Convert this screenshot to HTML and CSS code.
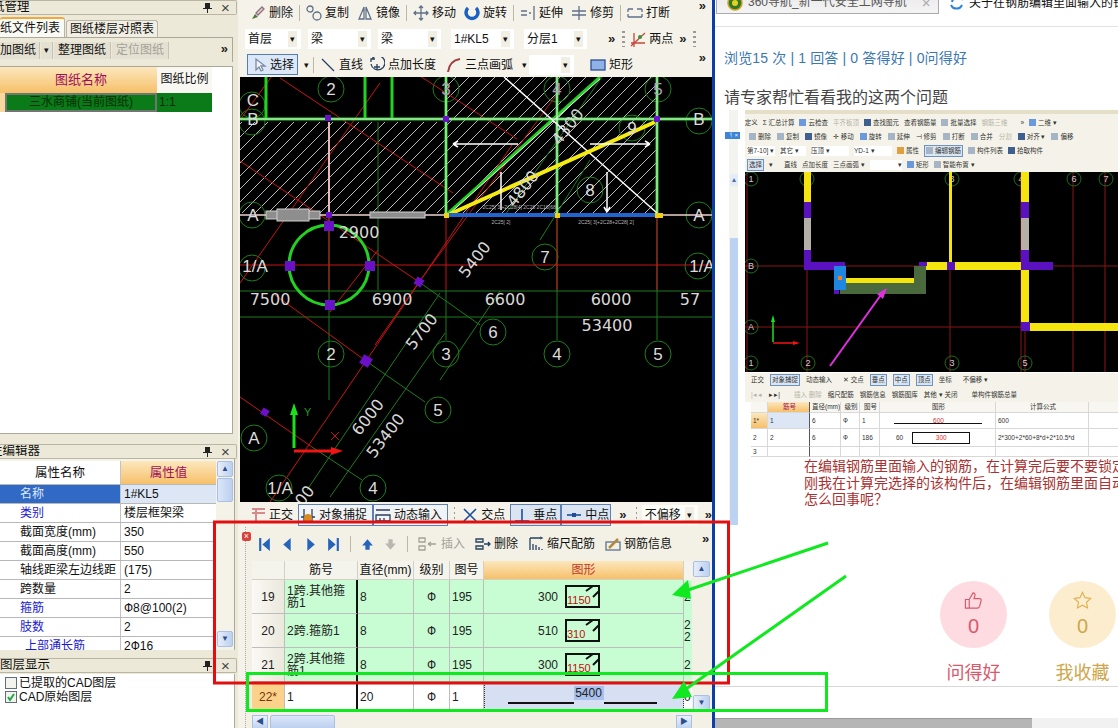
FILE: index.html
```html
<!DOCTYPE html>
<html lang="zh">
<head>
<meta charset="utf-8">
<title>钢筋编辑</title>
<link rel="stylesheet" href="styles.css">
</head>
<body>
<div class="app">

  <aside class="left">
    <div class="ptitle"><span class="ptext clip-a">纸管理</span><svg class="pin" viewBox="0 0 9 11"><path d="M2 1h5v5h2v1H5v4H4V7H0V6h2z"/></svg><span class="close">×</span></div>
    <div class="tabs">
      <span class="tab on">纸文件列表</span>
      <span class="tab">图纸楼层对照表</span>
    </div>
    <div class="lbar">
      <span class="lbtn w-a">加图纸</span><span class="lbtn w-b">▾</span><span class="lbtn">整理图纸</span><span class="lbtn off">定位图纸</span>
      <span class="more lmore">»</span>
    </div>
    <div class="sheet">
      <div class="srow shead"><span class="sc0 org"></span><span class="sc1 org">图纸名称</span><span class="sc2">图纸比例</span></div>
      <div class="srow scur"><span class="sc0 pale"></span><span class="sc1 cur">三水商铺(当前图纸)</span><span class="sc2 cur2">1:1</span></div>
    </div>

    <div class="ptitle t2"><span class="ptext clip-b">性编辑器</span><svg class="pin" viewBox="0 0 9 11"><path d="M2 1h5v5h2v1H5v4H4V7H0V6h2z"/></svg><span class="close">×</span></div>
    <div class="props">
      <div class="ptable">
        <div class="prow phead"><span class="pa mc">属性名称</span><span class="pb mc org mag">属性值</span></div>
        <div class="prow"><span class="pa sel">名称</span><span class="pb selv">1#KL5</span></div>
        <div class="prow"><span class="pa blue">类别</span><span class="pb">楼层框架梁</span></div>
        <div class="prow"><span class="pa">截面宽度(mm)</span><span class="pb">350</span></div>
        <div class="prow"><span class="pa">截面高度(mm)</span><span class="pb">550</span></div>
        <div class="prow"><span class="pa">轴线距梁左边线距</span><span class="pb">(175)</span></div>
        <div class="prow"><span class="pa">跨数量</span><span class="pb">2</span></div>
        <div class="prow"><span class="pa blue">箍筋</span><span class="pb">Ф8@100(2)</span></div>
        <div class="prow"><span class="pa blue">肢数</span><span class="pb">2</span></div>
        <div class="prow"><span class="pa blue ind">上部通长筋</span><span class="pb">2Ф16</span></div>
      </div>
      <div class="vbar pscroll"><span class="vbtn">▲</span><span class="vthumb"></span><span class="vfill"></span><span class="vbtn">▼</span></div>
    </div>

    <div class="ptitle t3"><span class="ptext">图层显示</span><svg class="pin" viewBox="0 0 9 11"><path d="M2 1h5v5h2v1H5v4H4V7H0V6h2z"/></svg><span class="close">×</span></div>
    <div class="layers">
      <label class="lay"><span class="chk"></span>已提取的CAD图层</label>
      <label class="lay"><span class="chk"><svg viewBox="0 0 10 10"><path class="tick" d="M2 5l2 3 4-6"/></svg></span>CAD原始图层</label>
    </div>
  </aside>

  <main class="mid">
    <div class="bar bar1">
      <span class="tool"><svg class="ic" viewBox="0 0 16 16"><path class="i-g" d="M2 14l3-5 3 3z"/><path class="i-p" d="M6 8l6-6 2 2-6 6z"/></svg>删除</span><i class="sep"></i>
      <span class="tool"><svg class="ic" viewBox="0 0 16 16"><circle class="i-l" cx="4" cy="4" r="3"/><circle class="i-l" cx="11" cy="11" r="4"/></svg>复制</span>
      <span class="tool"><svg class="ic" viewBox="0 0 16 16"><path class="i-l" d="M7 2L2 14h5zM9 2l5 12H9z"/></svg>镜像</span><i class="sep"></i>
      <span class="tool"><svg class="ic" viewBox="0 0 16 16"><path class="i-l" d="M8 1v14M1 8h14M6 3l2-2 2 2M6 13l2 2 2-2M3 6L1 8l2 2M13 6l2 2-2 2"/></svg>移动</span>
      <span class="tool"><svg class="ic" viewBox="0 0 16 16"><path class="i-b" d="M4 3a6 6 0 1 0 8 0"/></svg>旋转</span><i class="sep"></i>
      <span class="tool"><svg class="ic" viewBox="0 0 16 16"><path class="i-l" d="M1 6h6M1 10h6M9 8h2M14 1v14"/></svg>延伸</span>
      <span class="tool"><svg class="ic" viewBox="0 0 16 16"><path class="i-l" d="M1 6h14M1 10h14M8 1v14"/></svg>修剪</span><i class="sep"></i>
      <span class="tool"><svg class="ic" viewBox="0 0 16 16"><path class="i-l" d="M1 4h5M10 4h5M1 12h14M1 4v3M15 4v3M1 12V9M15 12V9"/></svg>打断</span>
      <span class="more bar-more">»</span>
    </div>
    <div class="bar bar2">
      <span class="combo c1">首层<b>▾</b></span>
      <span class="combo c2">梁<b>▾</b></span>
      <span class="combo c2">梁<b>▾</b></span>
      <span class="combo c3">1#KL5<b>▾</b></span>
      <span class="combo c3">分层1<b>▾</b></span>
      <span class="more m2">»</span>
      <i class="grip g2"></i>
      <span class="tool"><svg class="ic" viewBox="0 0 16 16"><path class="i-r" d="M1 12h14M4 2v14M1 15L15 2"/><circle class="i-gf" cx="10" cy="6" r="2"/></svg>两点</span>
      <span class="more m3">»</span>
      <i class="grip"></i>
    </div>
    <div class="bar bar3">
      <span class="tool sel-btn"><svg class="ic" viewBox="0 0 16 16"><path class="i-w" d="M5 2v11l3-3 2 4 2-1-2-4h4z"/></svg>选择</span><b class="arr">▾</b><i class="sep"></i>
      <span class="tool"><svg class="ic" viewBox="0 0 16 16"><path class="i-dk" d="M2 2l12 12"/></svg>直线</span>
      <span class="tool"><svg class="ic" viewBox="0 0 16 16"><path class="i-dk" d="M6 2h-4v3M3 2a7 7 0 1 1-1 5"/><path class="i-dk" d="M8 7v6M5 10h6"/></svg>点加长度</span>
      <span class="tool t-arc"><svg class="ic" viewBox="0 0 16 16"><path class="i-red" d="M2 15C3 7 7 3 14 2"/></svg>三点画弧</span><b class="arr a2">▾</b>
      <span class="combo c4"><b>▾</b></span>
      <span class="tool t-rect"><svg class="ic" viewBox="0 0 16 16"><rect class="i-rc" x="1" y="3" width="14" height="10"/></svg>矩形</span>
      <span class="more bar-more">»</span>
    </div>

    <svg class="cad" viewBox="240 77 472 425" preserveAspectRatio="none">
      <defs>
        <pattern id="hatch" width="13" height="13" patternUnits="userSpaceOnUse">
          <path class="hl" d="M-1 14L14 -1"/>
        </pattern>
      </defs>
      <rect class="bg" x="240" y="77" width="472" height="425"/>
      <rect fill="url(#hatch)" x="240" y="122" width="206" height="91"/>
      <rect fill="url(#hatch)" x="446" y="77" width="211" height="136"/>
      <g class="gthin">
        <path d="M240 291H712M240 317H712M329 215V400M378 122V290M446 290V340M557 215V340M657 215V340"/>
        <path d="M440 293L307 490M445 333L330 497M500 291L440 380"/>
        <path d="M419 282L480 325M366 361L425 402M312 447L362 480"/>
        <path d="M505 215L602 77M590 160L540 240"/>
        <circle cx="331" cy="89" r="13"/><circle cx="446" cy="89" r="13"/><circle cx="557" cy="89" r="13"/><circle cx="658" cy="89" r="13"/>
        <circle cx="252" cy="105" r="13"/><circle cx="252" cy="122" r="13"/><circle cx="699" cy="121" r="13"/>
        <circle cx="252" cy="215" r="13"/><circle cx="699" cy="215" r="13"/><circle cx="252" cy="268" r="13"/><circle cx="698" cy="266" r="13"/>
        <circle cx="545" cy="257" r="13"/><circle cx="590" cy="190" r="13"/><circle cx="632" cy="128" r="13"/>
        <circle cx="493" cy="332" r="13"/><circle cx="331" cy="354" r="13"/><circle cx="446" cy="354" r="13"/><circle cx="557" cy="354" r="13"/><circle cx="658" cy="354" r="13"/>
        <circle cx="438" cy="410" r="13"/><circle cx="254" cy="438" r="13"/><circle cx="279" cy="488" r="13"/><circle cx="373" cy="488" r="13"/>
      </g>
      <g class="rthin">
        <path d="M240 265H712M446 215V290M557 215V290M657 215V290M329 215V290"/>
        <path d="M280 78L453 193M420 76L517 139M240 161L419 282M275 295L366 361M240 397L312 447"/>
        <path d="M272 76L240 120M380 83L240 283M560 90L419 282L375 345M512 145L366 361L270 502M378 250L330 312"/>
        <path d="M331 432l8 8m0-8l-8 8"/>
      </g>
      <g class="wall">
        <path d="M266 77V119M365 77V119M392 77V119"/>
        <path d="M240 119H712"/>
        <path d="M446 77V215M557 77V215M657 77V215"/>
        <path d="M446 215L600 77"/>
        <circle class="ring" cx="329" cy="265" r="40"/>
      </g>
      <g class="wcore">
        <path d="M446 77V215M557 77V215M657 77V215M240 119H712"/>
        <path d="M448 215L600 79"/>
      </g>
      <path class="wline" d="M329 122V215"/>
      <path class="wwhite" d="M504 77L657 213"/>
      <path class="yel" d="M450 214L655 122"/>
      <path class="pink" d="M240 215H712"/>
      <path class="blueb" d="M447 215H657"/>
      <g class="barg">
        <rect x="266" y="211" width="54" height="8"/><rect x="277" y="209" width="32" height="12"/><rect x="370" y="212" width="55" height="6"/>
      </g>
      <g class="arrowline">
        <path d="M454 144H518M453 144l5-3M453 144l5 3M590 144H650M650 144l-5-3M650 144l-5 3M501 172V210M607 172V212M607 212l-3-5M607 212l3-5"/>
      </g>
      <g class="purple">
        <rect x="324" y="221" width="10" height="10"/><rect x="285" y="261" width="10" height="10"/><rect x="365" y="261" width="10" height="10"/><rect x="325" y="300" width="10" height="10"/>
        <rect x="325" y="115" width="6" height="6"/><rect x="443" y="116" width="6" height="6"/><rect x="654" y="116" width="6" height="6"/><rect x="326" y="212" width="6" height="6"/>
        <rect x="415" y="278" width="8" height="8" transform="rotate(30 419 282)"/><rect x="361" y="356" width="10" height="10" transform="rotate(30 366 361)"/><rect x="261" y="409" width="7" height="7" transform="rotate(30 265 413)"/>
      </g>
      <g class="corner">
        <rect x="444" y="213" width="5" height="5"/><rect x="555" y="213" width="5" height="5"/><rect x="655" y="213" width="8" height="5"/>
      </g>
      <g class="dim">
        <text x="270" y="305" text-anchor="middle">7500</text><text x="392" y="305" text-anchor="middle">6900</text><text x="505" y="305" text-anchor="middle">6600</text><text x="611" y="305" text-anchor="middle">6000</text><text x="690" y="305" text-anchor="middle">57</text>
        <text x="607" y="331" text-anchor="middle">53400</text><text x="359" y="238" text-anchor="middle">2900</text>
        <text x="422" y="337" text-anchor="middle" transform="rotate(-52 422 332)">5700</text>
        <text x="369" y="422" text-anchor="middle" transform="rotate(-52 369 418)">6000</text>
        <text x="386" y="441" text-anchor="middle" transform="rotate(-52 386 436)">53400</text>
        <text x="475" y="265" text-anchor="middle" transform="rotate(-52 475 260)">5400</text>
        <text x="523" y="194" text-anchor="middle" transform="rotate(-52 523 189)">4800</text>
        <text x="568" y="132" text-anchor="middle" transform="rotate(-52 568 127)">4300</text>
        <text x="305" y="501" text-anchor="middle" transform="rotate(-52 305 496)">00</text>
      </g>
      <g class="axtx">
        <text x="331" y="95">2</text><text x="446" y="95" class="fa">3</text><text x="557" y="95" class="fa">4</text><text x="658" y="95" class="fa">5</text>
        <text x="253" y="106">C</text><text x="253" y="125">B</text><text x="699" y="125">B</text><text x="253" y="221">A</text><text x="699" y="221">A</text>
        <text x="255" y="272">1/A</text><text x="702" y="272">1/A</text><text x="545" y="263">7</text><text x="590" y="196">8</text><text x="632" y="134">9</text>
        <text x="493" y="338">6</text><text x="331" y="360">2</text><text x="446" y="360">3</text><text x="557" y="360">4</text><text x="658" y="360">5</text><text x="438" y="416">5</text><text x="254" y="444">A</text><text x="280" y="494">1/A</text><text x="373" y="494">4</text>
      </g>
      <text class="tiny" x="606" y="224" text-anchor="middle">2C25[ 3]+2C28+2C28[ 2]</text>
      <text class="tiny" x="501" y="224" text-anchor="middle">2C25[ 2]</text>
      <text class="tiny" x="520" y="209" text-anchor="middle">2C25[ 3]+2C28[4] 2C28 2C16(68)</text>
      <path class="axg" d="M294 448V410"/><path class="axgh" d="M294 403l-4 12h8z"/>
      <path class="axr" d="M294 451H336"/><path class="axrh" d="M343 451l-12-4v8z"/>
      <text class="yl" x="304" y="416">Y</text>
    </svg>

    <div class="bar bar4">
      <span class="tool"><svg class="ic" viewBox="0 0 16 16"><path class="i-pk" d="M2 2h13M2 6h13M6 2v13"/></svg>正交</span>
      <span class="tool btn w74"><svg class="ic" viewBox="0 0 16 16"><path class="i-dk" d="M1 10h14M4 2v14M12 2v14"/><circle class="i-o" cx="8" cy="11" r="4"/></svg>对象捕捉</span><span class="tool btn w74"><svg class="ic" viewBox="0 0 16 16"><path class="i-dk" d="M1 3h14M1 8h14v6H1zM5 11v3M9 11v3"/></svg>动态输入</span>
      <i class="grip g4"></i>
      <span class="tool"><svg class="ic" viewBox="0 0 16 16"><path class="i-nav" d="M2 2l12 12M14 2L2 14"/></svg>交点</span>
      <span class="tool btn w51"><svg class="ic" viewBox="0 0 16 16"><path class="i-nav" d="M1 14h14M8 2v12"/></svg>垂点</span><span class="tool btn w50"><svg class="ic" viewBox="0 0 16 16"><path class="i-nav" d="M1 8h14"/><rect class="i-navf" x="6" y="6" width="4" height="4"/></svg>中点</span>
      <span class="more m4">»</span>
      <i class="grip g5"></i>
      <span class="combo c5">不偏移<b>▾</b></span>
      <span class="more m5">»</span>
    </div>

    <section class="rebar">
      <span class="rx">×</span>
      <div class="navbar">
        <svg class="nv" viewBox="0 0 12 14"><path class="nf" d="M1 1h2v12H1zM11 1v12L4 7z"/></svg>
        <svg class="nv" viewBox="0 0 12 14"><path class="nf" d="M9 1v12L2 7z"/></svg>
        <svg class="nv" viewBox="0 0 12 14"><path class="nf" d="M3 1v12l7-6z"/></svg>
        <svg class="nv" viewBox="0 0 12 14"><path class="nf" d="M1 1v12l7-6zM9 1h2v12H9z"/></svg>
        <i class="sep nsep"></i>
        <svg class="nv" viewBox="0 0 12 14"><path class="nf" d="M6 2l5 6H8v4H4V8H1z"/></svg>
        <svg class="nv" viewBox="0 0 12 14"><path class="nd" d="M6 12L1 6h3V2h4v4h3z"/></svg>
        <i class="sep nsep"></i>
        <span class="tool off"><svg class="ic wide" viewBox="0 0 20 16"><path class="i-gr" d="M1 2h6v4H1zM1 10h6v4H1zM10 8h8M10 8l3-2M10 8l3 2"/></svg>插入</span>
        <span class="tool"><svg class="ic" viewBox="0 0 16 16"><path class="i-dk" d="M1 3h7v3H1zM1 10h7v3H1zM9 8h6M13 6l2 2-2 2"/></svg>删除</span>
        <span class="tool"><svg class="ic" viewBox="0 0 16 16"><path class="i-dk" d="M2 2h10M2 2v12M5 14V8M8 14V9M11 14v-3M14 14v-1M12 1l2 1-2 1"/></svg>缩尺配筋</span>
        <span class="tool"><svg class="ic" viewBox="0 0 16 16"><rect class="i-l" x="1" y="6" width="14" height="8"/><path class="i-o2" d="M4 12L13 3"/></svg>钢筋信息</span>
        <span class="more nmore">»</span>
      </div>
      <div class="gridwrap">
        <div class="gridbody">
          <div class="gr ghead"><span></span><span>筋号</span><span>直径(mm)</span><span>级别</span><span>图号</span><span class="org mag-d">图形</span><span class="last"></span></div>
          <div class="gr grn"><span class="rh">19</span><span class="jn">1跨.其他箍筋1</span><span class="l">8</span><span>Ф</span><span class="l">195</span>
            <span class="fig"><em>300</em><svg class="shape" viewBox="0 0 36 24"><rect x="1" y="1" width="33" height="21"/><path d="M34 6L28 12M28 1l-7 5"/><text x="2" y="19">1150</text></svg></span><span class="last">2</span></div>
          <div class="gr grn"><span class="rh">20</span><span class="jn">2跨.箍筋1</span><span class="l">8</span><span>Ф</span><span class="l">195</span>
            <span class="fig"><em>510</em><svg class="shape" viewBox="0 0 36 24"><rect x="1" y="1" width="33" height="21"/><path d="M34 6L28 12M28 1l-7 5"/><text x="2" y="19">310</text></svg></span><span class="last">2<br>2</span></div>
          <div class="gr grn"><span class="rh">21</span><span class="jn">2跨.其他箍筋1</span><span class="l">8</span><span>Ф</span><span class="l">195</span>
            <span class="fig"><em>300</em><svg class="shape" viewBox="0 0 36 24"><rect x="1" y="1" width="33" height="21"/><path d="M34 6L28 12M28 1l-7 5"/><text x="2" y="19">1150</text></svg></span><span class="last">2</span></div>
          <div class="gr gcur"><span class="rh rhc">22*</span><span class="l">1</span><span class="l">20</span><span>Ф</span><span class="l">1</span>
            <span class="figc"><i class="ln"></i><u>5400</u><i class="ln l2"></i></span><span class="last">0</span></div>
        </div>
        <div class="vbar gscroll"><span class="vbtn">▲</span><span class="vfill"></span><span class="vbtn">▼</span></div>
      </div>
      <div class="hbar"><span class="hbtn">◀</span><span class="hthumb"></span><span class="hfill"></span><span class="hbtn">▶</span></div>
    </section>
  </main>

  <div class="divider"></div>

  <section class="web">
    <div class="wtabs">
      <span class="wtab w1"><svg class="fav" viewBox="0 0 16 16"><circle cx="8" cy="8" r="7" class="fv1"/><circle cx="8" cy="8" r="3" class="fv2"/></svg>360导航_新一代安全上网导航<span class="wx">×</span></span>
      <span class="wtab w2"><svg class="fav" viewBox="0 0 16 16"><path class="fv3" d="M3 7a6 6 0 0 1 11-2M2 10a6 6 0 0 0 11 0"/></svg>关于在钢筋编辑里面输入的钢筋</span>
    </div>
    <p class="stat">浏览15 次 | 1 回答 | 0 答得好 | 0问得好</p>
    <h1 class="ask">请专家帮忙看看我的这两个问题</h1>

    <div class="shot">
      <div class="e-side">
        <span class="e-pin">ᛩ ×</span>
        <div class="e-scroll"><span class="e-arr">▴</span><span class="e-track"></span><span class="e-thumb"></span><span class="e-arr">▾</span></div>
      </div>
      <div class="e-main">
        <div class="e-bar e-r1"><span>»</span><span><i class="di bl"></i>定义</span><span>Σ 汇总计算</span><span><i class="di bl"></i>云检查</span><span class="gy">平齐板顶</span><span><i class="di nv2"></i>查找图元</span><span>查看钢筋量</span><span><i class="di gr2"></i>批量选择</span><span class="gy">钢筋三维</span><span class="e-more">»</span><span><i class="di bl"></i>二维 ▾</span></div>
        <div class="e-bar e-r2"><span><i class="di gr2"></i>删除</span><span><i class="di gr2"></i>复制</span><span><i class="di nv2"></i>镜像</span><span>✛ 移动</span><span><i class="di bl"></i>旋转</span><span><i class="di gr2"></i>延伸</span><span>⊣ 修剪</span><span><i class="di gr2"></i>打断</span><span><i class="di gr2"></i>合并</span><span class="gy">分割</span><span><i class="di nv2"></i>对齐 ▾</span><span><i class="di gr2"></i>偏移</span></div>
        <div class="e-bar e-r3"><span class="e-w1">第7-10] ▾</span><span class="e-w2">其它 ▾</span><span class="e-w3">压顶 ▾</span><span class="e-w3">YD-1 ▾</span><span><i class="di og"></i>属性</span><span class="e-on"><i class="di gr2"></i>编辑钢筋</span><span><i class="di gr2"></i>构件列表</span><span><i class="di nv2"></i>拾取构件</span></div>
        <div class="e-bar e-r4"><span class="e-on">选择</span><span>▾</span><span class="e-l">直线</span><span>点加长度</span><span>三点画弧 ▾</span><span class="e-w2 e-wh">▾</span><span><i class="di bl"></i>矩形</span><span><i class="di gr2"></i>智能布置 ▾</span></div>
        <svg class="e-cad" viewBox="745 172 373 200" preserveAspectRatio="none">
          <rect class="bg" x="745" y="172" width="373" height="200"/>
          <path class="e-red" d="M747 172V372M807 172V372M950 172V372M1021 172V372M1025 172V372M1073 172V372M1105 172V372M745 266H1118M745 327H1118"/>
          <g class="e-c">
            <circle cx="751" cy="179" r="7"/><circle cx="807" cy="179" r="7"/><circle cx="952" cy="179" r="7"/><circle cx="1021" cy="179" r="7"/><circle cx="1074" cy="179" r="7"/><circle cx="1106" cy="179" r="7"/>
            <circle cx="751" cy="266" r="7"/><circle cx="751" cy="327" r="7"/><circle cx="751" cy="363" r="7"/><circle cx="808" cy="363" r="7"/><circle cx="952" cy="363" r="7"/><circle cx="1025" cy="363" r="7"/>
          </g>
          <g class="e-t">
            <text x="751" y="182">1</text><text x="807" y="182">2</text><text x="952" y="182">3</text><text x="1021" y="182">4</text><text x="1074" y="182">6</text><text x="1106" y="182">7</text>
            <text x="751" y="269">B</text><text x="751" y="330">A</text><text x="751" y="366">1</text><text x="808" y="366">2</text><text x="952" y="366">3</text><text x="1025" y="366">5</text>
          </g>
          <path class="e-y" d="M804 172h7v30h-7zM949 172h3v90h-3zM926 262h96v8h-96zM1021 172h8v30h-8zM1021 270h8v52h-8zM1029 323h89v8h-89zM846 278h68v5h-68z"/>
          <path class="e-p" d="M804 202h7v16h-7zM804 250h7v12h34v8h-41zM1021 202h8v16h-8zM1021 250h8v12h24v8h-32zM1021 322h9v9h-9zM947 262h8v8h-8zM919 262h8v4h-8zM834 290h5v4h-5zM922 290h4v4h-4z"/>
          <path class="e-gy" d="M804 218h7v32h-7zM1021 218h8v32h-8z"/>
          <path class="e-dg" d="M914 266h12v28H840v-11h74z"/>
          <rect class="e-bb" x="834" y="266" width="12" height="24"/>
          <rect class="e-ob" x="838" y="276" width="4" height="4"/>
          <path class="e-ax1" d="M773 342V318"/><path class="e-axg" d="M773 315l-2 7h4z"/>
          <path class="e-ax2" d="M773 343H796"/><path class="e-axr" d="M800 343l-7-2v4z"/>
          <path class="e-pk" d="M830 366L883 292"/><path class="e-pkh" d="M887 288l-10 6 6 5z"/>
        </svg>
        <div class="e-bar e-r5"><span>正交</span><span class="e-on">对象捕捉</span><span>动态输入</span><span class="e-g">✕ 交点</span><span class="e-on">垂点</span><span class="e-on">中点</span><span class="e-on">顶点</span><span>坐标</span><span class="e-g">不偏移 ▾</span></div>
        <div class="e-bar e-r6"><span class="gy">|◂ ◂</span><span>▸ ▸|</span><span class="gy e-g2">插入 删除</span><span>缩尺配筋</span><span>钢筋信息</span><span>钢筋图库</span><span>其他 ▾ 关闭</span><span class="e-g2">单构件钢筋总量</span></div>
        <div class="e-grid">
          <div class="eg eg-h"><span></span><span class="org mag">筋号</span><span>直径(mm)</span><span>级别</span><span>图号</span><span>图形</span><span>计算公式</span><span></span></div>
          <div class="eg eg-a"><span class="org">1*</span><span class="egsel">1</span><span>6</span><span>Ф</span><span>1</span><span class="egf"><b class="red600">600</b><i class="ehl"></i></span><span>600</span><span></span></div>
          <div class="eg eg-b"><span>2</span><span>2</span><span>6</span><span>Ф</span><span>186</span><span class="egf2">60<b class="box300">300</b></span><span>2*300+2*60+8*d+2*10.5*d</span><span></span></div>
          <div class="eg eg-c"><span>3</span><span></span><span></span><span></span><span></span><span></span><span></span><span></span></div>
        </div>
        <p class="e-note">在编辑钢筋里面输入的钢筋，在计算完后要不要锁定构件<br>刚我在计算完选择的该构件后，在编辑钢筋里面自动多出<br>怎么回事呢？</p>
      </div>
    </div>

    <div class="votes">
      <div class="vote good">
        <span class="disc"><svg viewBox="0 0 20 20"><path d="M1.5 9h4v9h-4zM5.5 9l4-7c1.5 0 2.5 1 2 3l-1 3h6c1 0 2 1 1.500 2l-1.500 6c-.3 1-1 2-2 2h-9"/></svg><b>0</b></span>
        <span class="vl">问得好</span>
      </div>
      <div class="vote fav2">
        <span class="disc"><svg viewBox="0 0 20 20"><path d="M10 1.500l2.600 5.500 6 .8-4.400 4.100 1.100 6L10 15l-5.300 2.900 1.100-6L1.400 7.800l6-.8z"/></svg><b>0</b></span>
        <span class="vl">我收藏</span>
      </div>
    </div>
    <div class="wline-h"></div>
    <div class="wscroll"><span></span></div>
  </section>
</div>

<svg class="marks" viewBox="0 0 1118 728">
  <rect class="m-red" x="214.500" y="522" width="514" height="161"/>
  <rect class="m-green" x="247.500" y="673.500" width="579" height="37"/>
  <path class="m-arrow" d="M828 543L685 591"/>
  <path class="m-head" d="M672 595l16-15 3 19z"/>
  <path class="m-arrow" d="M846 576L686 689"/>
  <path class="m-head" d="M672 699l12-18 8 16z"/>
</svg>
</body>
</html>
```

FILE: styles.css
```css
* { box-sizing: border-box; }
html, body { margin: 0; padding: 0; height: 728px; overflow: hidden; background: #fff; }
body { font: 12px/16px "Liberation Sans", "Noto Sans CJK SC", sans-serif; color: #111; position: relative; }
p, h1 { margin: 0; }
.app { display: grid; grid-template-columns: 238px 474px 3px 403px; height: 728px; overflow: hidden; }

/* shared */
.org { background: linear-gradient(#fce7bd, #f6c069); }
.more { font-weight: 700; font-size: 13px; color: #222; }
.sep { display: block; width: 1px; height: 16px; background: #bbb8a6; margin: 0 -2px; }
.grip { display: block; width: 3px; height: 16px; background: repeating-linear-gradient(#999 0 2px, transparent 2px 5px); }
.tool { display: flex; align-items: center; gap: 3px; white-space: nowrap; flex: none; }
.ic { width: 16px; height: 16px; flex: none; fill: none; stroke-width: 1.300; }
.ic.wide { width: 20px; }
.off { color: #a5a298; }

.i-g { fill: #4d7a3a; }
.i-p { fill: #e8d8b8; stroke: #8c6d8c; }
.i-l { stroke: #60708a; fill: none; }
.i-b { stroke: #1b5fc0; stroke-width: 3.500; fill: none; }
.i-r { stroke: #c9463a; fill: none; }
.i-gf { fill: #3e8c3e; }
.i-w { fill: #eef2fb; stroke: #7a8aa0; }
.i-dk { stroke: #27405f; fill: none; }
.i-red { stroke: #a04040; stroke-width: 2; fill: none; }
.i-rc { fill: #8fb2e6; stroke: #2c4f8f; }
.i-pk { stroke: #d88a8a; stroke-width: 2; fill: none; }
.i-o { fill: #d98a20; }
.i-o2 { stroke: #b08a40; stroke-width: 2.500; }
.i-nav { stroke: #1c4e9c; fill: none; stroke-width: 1.600; }
.i-navf { fill: #1c4e9c; }
.i-gr { stroke: #a5a298; fill: none; }

/* left column */
.left { background: #ece9d8; display: flex; flex-direction: column; height: 728px; overflow: hidden; }
.ptitle { height: 15px; display: flex; align-items: center; background: #ece9d8; border: 1px solid #b9b6a5; border-left: 0; border-radius: 0 2px 2px 0; flex: none; margin-right: 1px; font-size: 12.500px; }
.ptext { flex: 1; white-space: nowrap; overflow: hidden; line-height: 13px; }
.clip-a { text-indent: -8px; }
.clip-b { text-indent: -10px; }
.pin { width: 9px; height: 11px; fill: #222; margin-right: 9px; }
.close { width: 12px; color: #444; font-size: 15px; line-height: 13px; margin-right: 3px; }
.tabs { height: 21px; margin-top: 1px; display: flex; align-items: flex-end; flex: none; }
.tab { height: 17px; padding: 0 3px; background: #f1efe4; border: 1px solid #b9b6a5; border-bottom: 0; border-radius: 3px 3px 0 0; line-height: 16px; white-space: nowrap; }
.tab.on { height: 20px; width: 65px; padding: 1px 0 0; background: #fafaf5; border-top: 2px solid #f2a93b; border-left: 0; margin-right: 1px; }
.lbar { height: 25px; margin-right: 5px; padding-top: 4px; display: flex; gap: 1px; align-items: flex-start; flex: none; position: relative; border-right: 1px solid #aca899; border-top: 1px solid #aca899; }
.lbtn { height: 17px; padding: 0 4px; background: #e4e1d2; line-height: 16px; white-space: nowrap; border-right: 1px solid #c6c3b3; }
.w-a { padding: 0 3px 0 0; }
.w-b { padding: 0 3px; font-size: 9px; }
.lmore { margin-left: auto; padding: 0 4px; height: 17px; line-height: 14px; }
.sheet { height: 368px; background: #fff; margin: 4px 5px 0 0; border-top: 1px solid #aca899; border-bottom: 1px solid #aca899; border-right: 1px solid #aca899; flex: none; }
.srow { display: grid; grid-template-columns: 5px 152px 55px; }
.shead { height: 26px; line-height: 25px; text-align: center; }
.shead .sc1 { color: #a0105a; font-size: 13px; }
.shead .sc2 { font-size: 12px; background: #f8f7f1; }
.scur { height: 19px; line-height: 18px; }
.pale { background: #f8d89d; }
.cur { background: #0b7a18; border: 2px solid #6f7770; text-align: center; color: #06300a; font-size: 12px; line-height: 15px; }
.cur2 { background: #0b7a18; color: #06300a; padding-left: 2px; }
.t2 { margin-top: 10px; }
.props { height: 191px; display: flex; margin-right: 3px; padding-top: 2px; overflow: hidden; flex: none; border-right: 1px solid #aca899; background: #f5f3e8; }
.ptable { width: 216px; height: 189px; overflow: hidden; background: #fff; flex: none; }
.prow { display: grid; grid-template-columns: 121px 95px; height: 19px; line-height: 18px; border-bottom: 1px solid #b8b8b8; white-space: nowrap; }
.phead { height: 24px; line-height: 24px; }
.pa { padding-left: 20px; border-right: 1px solid #c3c3c3; overflow: hidden; }
.pb { padding-left: 3px; overflow: hidden; }
.mc { text-align: center; padding: 0; font-size: 12.500px; }
.mag { color: #a0105a; }
.sel { background: #316ac5; color: #dfe8f8; }
.selv { background: #dce6f5; }
.blue { color: #1a1ad0; }
.ind { padding-left: 25px; }
.pscroll { width: 16px; margin-left: 1px; height: 186px; }
.vbar { display: flex; flex-direction: column; flex: none; }
.vbtn { height: 16px; flex: none; background: linear-gradient(90deg, #e6eefb, #bcd0ef); border: 1px solid #a9bfe3; border-radius: 2px; color: #2c4e8c; font-size: 8px; line-height: 14px; text-align: center; }
.vthumb { height: 24px; margin-top: 1px; flex: none; background: linear-gradient(90deg, #dbe6f9, #bcd0ef); border: 1px solid #a9bfe3; border-radius: 2px; }
.vfill { flex: 1; }
.t3 { margin-top: 8px; }
.layers { flex: 1; background: #fff; margin-right: 3px; border-right: 1px solid #aca899; padding: 2px 0 0 5px; margin-top: 1px; }
.lay { display: flex; align-items: center; gap: 2px; height: 14px; white-space: nowrap; }
.chk { width: 12px; height: 12px; border: 1px solid #5f6f80; background: #f4f4ee; display: block; flex: none; }
.chk svg { display: block; }
.tick { fill: none; stroke: #21a84a; stroke-width: 2; }

/* middle column */
.mid { background: #f5f3e9; display: flex; flex-direction: column; height: 728px; width: 474px; overflow: hidden; padding: 0 0 0 2px; }
.bar { display: flex; align-items: center; position: relative; flex: none; white-space: nowrap; }
.bar1 { height: 26px; padding-left: 10px; gap: 8px; }
.bar-more { position: absolute; right: 6px; top: -2px; }
.bar2 { height: 26px; padding-left: 5px; gap: 7px; }
.bar2 .c3 { margin-left: 3px; }
.bar2 .g2 { margin-right: -2px; }
.combo { display: flex; align-items: center; justify-content: space-between; height: 20px; background: #fff; padding: 0 4px 0 3px; flex: none; }
.combo b { font-size: 9px; font-weight: 400; background: #f1efe4; padding: 0 2px; }
.c1 { width: 56px; }
.c2 { width: 63px; }
.c3 { width: 63px; }
.c4 { width: 45px; margin-left: -4px; justify-content: flex-end; }
.c5 { width: 56px; background: #fdfdf8; margin-left: 5px; }
.m2 { margin-left: 14px; }
.m3 { margin-left: -1px; }
.bar3 { height: 25px; padding-left: 7px; gap: 6px; }
.sel-btn { width: 51px; height: 21px; padding-left: 3px; background: #dce8f8; border: 1px solid #517fb5; }
.arr { font-size: 9px; font-weight: 400; }
.bar3 .sep { margin: 0 0 0 -2px; }
.bar3 .t-arc { margin-left: 4px; }
.a2 { margin-left: 3px; }
.t-rect { margin-left: 10px; }
.cad { display: block; width: 472px; height: 425px; flex: none; }
.bg { fill: #000; }
.hl { stroke: #b8b8b8; stroke-width: 1; fill: none; }
.gthin path, .gthin circle { stroke: #1d7d1d; fill: none; stroke-width: 1; }
.rthin path { stroke: #c91414; fill: none; stroke-width: 1; }
.wall path, .wall circle { stroke: #23d123; stroke-width: 3; fill: none; }
.wcore path { stroke: #eef7ee; stroke-width: 1; fill: none; }
.ring { stroke-width: 3; }
.wline { stroke: #e9b7b7; stroke-width: 2; fill: none; }
.wwhite { stroke: #fff; stroke-width: 1.500; fill: none; }
.yel { stroke: #f5ea12; stroke-width: 4; fill: none; }
.pink { stroke: #f0d2d2; stroke-width: 1.500; fill: none; }
.blueb { stroke: #2265d0; stroke-width: 4; fill: none; }
.barg rect { fill: #8e8e8e; stroke: #cfcfcf; stroke-width: 1; }
.arrowline path { stroke: #fff; stroke-width: 1.500; fill: none; }
.purple rect { fill: #6a10c8; }
.corner rect { fill: #f0d010; }
.dim text { font: 16px "DejaVu Sans", sans-serif; fill: #d8d8d8; }
.axtx text { font: 17px "Liberation Sans", sans-serif; fill: #dcdcdc; text-anchor: middle; }
.axtx text.fa { fill: #b49ac0; }
.tiny { font: 5px "Liberation Sans", sans-serif; fill: #b6b6b6; }
.axg { stroke: #1de01d; stroke-width: 3; }
.axgh { fill: #1de01d; }
.axr { stroke: #f01414; stroke-width: 3; }
.axrh { fill: #f01414; }
.yl { font: 11px "Liberation Sans", sans-serif; fill: #1d9a1d; }

.bar4 { height: 25px; padding-left: 10px; gap: 0; }
.bar4 .tool { margin-right: 5px; }
.btn { height: 22px; border: 1px solid #5c80b2; background: #f1f3f4; padding-left: 1px; margin-right: 0 !important; }
.w74 { width: 75px; }
.bar4 .w51 { width: 51px; background: #dbe5f1; padding-left: 3px; }
.bar4 .w50 { width: 50px; background: #dbe5f1; padding-left: 4px; }
.g4 { margin: 0 7px 0 6px; }
.m4 { margin: 0 9px 0 8px; }
.g5 { margin: 0; }
.m5 { margin-left: 7px; }

.rebar { flex: 1; background: #f3f1e6; position: relative; padding: 6px 0 0 12px; border-left: 1px dotted #a8a8a8; margin-left: 5px; min-height: 0; }
.rx { position: absolute; left: -4px; top: 5px; width: 9px; height: 9px; background: #d8413a; color: #fff; font-size: 9px; line-height: 8px; text-align: center; border-radius: 2px; }
.navbar { display: flex; align-items: center; gap: 10px; height: 22px; padding-left: 0; position: relative; }
.nv { width: 13px; height: 15px; flex: none; }
.nf { fill: #2664bc; }
.nd { fill: #b8b8b0; }
.nsep { margin: 0; }
.nmore { position: absolute; left: 444px; top: -2px; }
.gridwrap { display: flex; margin-top: 6px; margin-left: -6px; height: 150px; }
.gridbody { width: 440px; overflow: hidden; flex: none; background: #fff; }
.gr { display: grid; grid-template-columns: 33px 73px 56px 36px 34px 200px 8px; height: 34px; }
.gr > span { overflow: hidden; border-right: 1px solid #bdbdbd; border-bottom: 1px solid #bdbdbd; display: flex; align-items: center; justify-content: center; white-space: nowrap; }
.ghead { height: 19px; background: #f5f4ec; }
.ghead > span { border-color: #d2d0c4; line-height: 17px; }
.mag-d { color: #c0392b; }
.grn { background: #c8fdd3; }
.grn > span, .gcur > span { color: #222; }
.rh { background: #f4f3ec; }
.gcur > .rhc { background: #fad28a; color: #7a3410; }
.grn > .rh { background: linear-gradient(90deg, #faf9f4, #ebe8dc); }
.gr > .jn { white-space: normal; line-height: 12px; justify-content: flex-start; padding-left: 2px; border-right: 2px solid #111; }
.gcur > span:nth-child(2) { border-right: 2px solid #111; }
.gr > .l { justify-content: flex-start; padding-left: 2px; }
.gr > .last { border-right: 0; border-bottom: 0; justify-content: flex-start; line-height: 12px; background: transparent; }
.gr > .fig { justify-content: flex-start; padding-left: 54px; gap: 7px; }
.fig em { font-style: normal; }
.shape { width: 36px; height: 24px; flex: none; fill: none; stroke: #111; stroke-width: 2; }
.shape text { font: 11px "Liberation Sans", sans-serif; fill: #c01010; stroke: none; }
.gcur { height: 30px; background: #fff; }
.gr > .figc { background: #d6e0f2; border: 1px dotted #333; padding-right: 4px; }
.figc .ln { display: block; height: 2px; background: #111; width: 66px; margin-top: 12px; flex: none; }
.figc .l2 { width: 53px; }
.figc u { text-decoration: none; background: #a8c0ec; width: 30px; height: 14px; line-height: 14px; text-align: center; margin-top: -8px; flex: none; }
.gscroll { width: 17px; margin-left: 1px; height: 150px; }
.hbar { display: flex; margin-left: -6px; margin-top: 4px; width: 440px; height: 14px; gap: 2px; }
.hbtn { width: 16px; height: 14px; background: linear-gradient(#eaf1fc, #c2d4f0); border: 1px solid #a9bfe3; font-size: 8px; line-height: 12px; text-align: center; color: #2c4e8c; flex: none; }
.hthumb { width: 65px; background: linear-gradient(#dbe6f9, #bcd0ef); border: 1px solid #a9bfe3; border-radius: 2px; flex: none; }
.hfill { flex: 1; }

.divider { background: #0a3ea8; }

/* right column */
.web { background: #fff; position: relative; height: 728px; overflow: hidden; display: flex; flex-direction: column; }
.wtabs { height: 27px; border-bottom: 1px solid #e2e2e2; display: flex; align-items: flex-start; flex: none; overflow: hidden; }
.wtab { display: flex; align-items: center; height: 22px; margin-top: -8px; white-space: nowrap; line-height: 15px; font-size: 12px; overflow: hidden; }
.w1 { width: 224px; margin-left: 1px; background: linear-gradient(#e9e9e9, #f4f4f4); border: 1px solid #aaa; border-top: 0; color: #555; padding-left: 10px; gap: 5px; position: relative; }
.w2 { margin-left: 10px; gap: 4px; width: 170px; color: #111; }
.wx { color: #aaa; margin-left: 10px; font-size: 15px; }
.fav { width: 16px; height: 16px; flex: none; fill: none; }
.fv1 { fill: #2b7a2b; stroke: #d8a020; stroke-width: 1.500; }
.fv2 { fill: #e4d020; }
.fv3 { stroke: #2c84d8; stroke-width: 2; fill: none; }
.stat { margin: 23px 0 0 9px; font-size: 14px; line-height: 16px; color: #3c78b0; white-space: nowrap; flex: none; letter-spacing: .15px; }
.ask { margin: 22px 0 0 9px; font-size: 16px; line-height: 20px; font-weight: 400; color: #444; white-space: nowrap; flex: none; }
.shot { display: flex; margin: 2px 0 0 9px; width: 394px; height: 415px; overflow: hidden; flex: none; }
.e-side { width: 21px; flex: none; padding: 22px 0 0 1px; background: linear-gradient(90deg,#fff 0 5px,#f3f3f0 5px 14px,#fff 14px); }
.e-pin { display: block; background: #3c84d8; color: #fff; font-size: 6px; line-height: 7px; height: 7px; width: 15px; text-align: right; padding-right: 2px; }
.e-scroll { display: flex; flex-direction: column; height: 376px; width: 8px; margin: 35px 0 0 5px; }
.e-arr { height: 12px; flex: none; color: #5070a0; background: #e4ecf8; font-size: 8px; line-height: 12px; text-align: center; }
.e-track { height: 52px; flex: none; }
.e-thumb { flex: 1; background: #bcd2f2; }
.e-main { flex: 1; min-width: 0; overflow: hidden; }
.e-bar { display: flex; align-items: center; font-size: 6.500px; line-height: 10px; white-space: nowrap; background: #f5f3e9; color: #333; flex: none; }
.e-r1 { height: 20px; gap: 5px; margin-left: -18px; padding-top: 5px; background: linear-gradient(#e6dfc8 0 4px, #f5f3e9 4px); }
.e-r2 { height: 14px; gap: 6px; padding-left: 4px; }
.e-r3 { height: 14px; gap: 5px; padding-left: 2px; }
.e-r4 { height: 14px; gap: 5px; padding-left: 2px; }
.e-r5 { height: 14px; gap: 6px; padding-left: 6px; margin-top: 1px; }
.e-r6 { height: 15px; gap: 6px; padding-left: 6px; }
.e-more { margin-left: 8px; }
.gy { color: #b5b3a8; }
.e-w1 { width: 28px; background: #fff; }
.e-w2 { width: 26px; background: #fff; }
.e-w3 { width: 38px; background: #fff; }
.e-wh { text-align: right; width: 32px; }
.e-on { background: #dbe6f3; border: 1px solid #6f93c0; padding: 0 1px; }
.e-l { margin-left: 6px; }
.e-g { margin-left: 5px; }
.e-g2 { margin-left: 8px; }
.di { display: inline-block; width: 7px; height: 7px; margin-right: 2px; vertical-align: -1px; }
.bl { background: #6a9adc; }
.nv2 { background: #3f5f90; }
.gr2 { background: #a5b5c5; }
.og { background: #e0a040; }
.e-cad { display: block; width: 373px; height: 200px; }
.e-red { stroke: #8a1414; stroke-width: 1; fill: none; }
.e-c circle { stroke: #1d6d1d; fill: none; stroke-width: 1; }
.e-t text { font: 9px "Liberation Sans", sans-serif; fill: #cfcfcf; text-anchor: middle; }
.e-y { fill: #f5e50f; }
.e-p { fill: #5a12c0; }
.e-gy { fill: #b4b0a8; }
.e-dg { fill: #4a6a3e; }
.e-bb { fill: #1e88e0; }
.e-ob { fill: #f08020; }
.e-ax1 { stroke: #1de01d; stroke-width: 1.500; }
.e-axg { fill: #1de01d; }
.e-ax2 { stroke: #f01414; stroke-width: 1.500; }
.e-axr { fill: #f01414; }
.e-pk { stroke: #e030e0; stroke-width: 2; }
.e-pkh { fill: #e030e0; }
.e-grid { margin: 0 0 0 6px; font-size: 6.500px; color: #333; background: #fff; }
.eg { display: grid; grid-template-columns: 17px 42px 31px 19px 20px 116px 93px 40px; }
.eg > span { border-right: 1px solid #d8d8d8; border-bottom: 1px solid #d8d8d8; padding-left: 2px; white-space: nowrap; overflow: hidden; position: relative; }
.eg > span:nth-child(2) { border-right-color: #556; }
.eg-h { height: 11px; line-height: 10px; background: #f7f6f0; text-align: center; }
.eg-a { height: 16px; line-height: 15px; }
.eg-b { height: 18px; line-height: 17px; }
.eg-c { height: 10px; line-height: 9px; }
.egsel { background: #dce6f5; }
.egf { text-align: center; }
.red600 { font-weight: 400; color: #e03030; }
.ehl { position: absolute; left: 14px; top: 10px; width: 88px; height: 1px; background: #111; }
.eg > .egf2 { display: flex; align-items: center; gap: 9px; padding-left: 16px; }
.box300 { display: block; width: 58px; height: 12px; border: 1px solid #111; text-align: center; color: #e03030; font-weight: 400; line-height: 10px; }
.e-note { font-size: 14px; line-height: 16.500px; color: #a83232; margin: 0 0 0 59px; white-space: nowrap; font-family: "Noto Sans CJK SC", sans-serif; }
.votes { display: flex; justify-content: flex-end; gap: 42px; margin: 56px 2px 0 0; flex: none; }
.vote { width: 67px; display: flex; flex-direction: column; align-items: center; }
.disc { width: 67px; height: 67px; border-radius: 50%; display: flex; flex-direction: column; align-items: center; padding-top: 10px; }
.disc svg { width: 19px; height: 19px; fill: none; stroke-width: 1.200; }
.disc b { font-weight: 400; font-size: 20px; line-height: 28px; margin-top: 2px; }
.good .disc { background: #fddbe0; }
.good svg { stroke: #d9596b; }
.good b, .good .vl { color: #d9596b; }
.fav2 .disc { background: #fdedcf; }
.fav2 svg { stroke: #e0b050; }
.fav2 b, .fav2 .vl { color: #cfa64a; }
.vl { font-size: 18px; line-height: 24px; margin-top: 13px; white-space: nowrap; }
.wline-h { height: 1px; background: #d8d8d8; margin-top: 1px; flex: none; }
.wscroll { position: absolute; left: 0; right: 0; bottom: 0; height: 10px; background: #f1f1f1; }
.wscroll span { display: block; width: 317px; height: 10px; background: #b5b5b5; border-top: 1px solid #999; }

/* annotations drawn over the whole window */
.marks { position: absolute; left: 0; top: 0; width: 1118px; height: 728px; pointer-events: none; }
.m-red { fill: none; stroke: #e01010; stroke-width: 3; }
.m-green { fill: none; stroke: #10e820; stroke-width: 3; }
.m-arrow { stroke: #10e820; stroke-width: 3; fill: none; }
.m-head { fill: #10e820; }
```
